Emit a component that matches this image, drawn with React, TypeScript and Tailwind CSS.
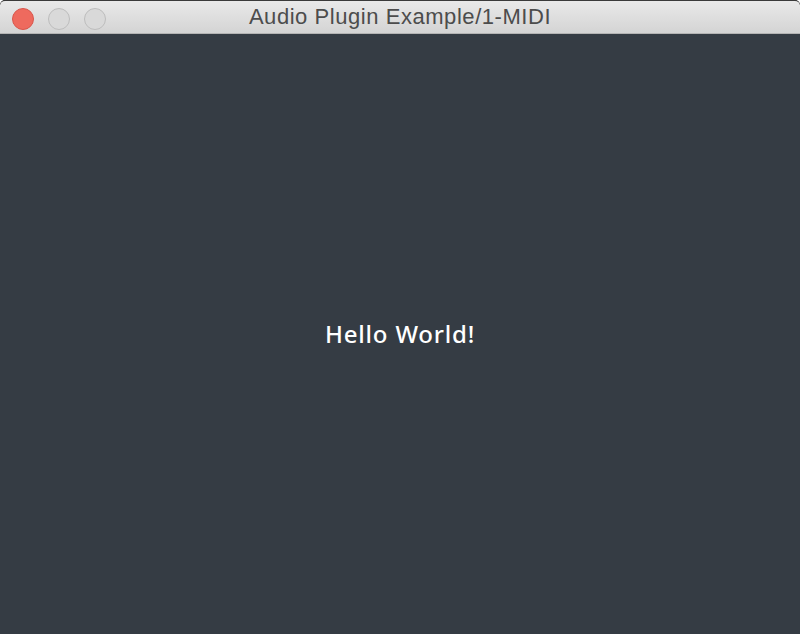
import React from "react";

export default function App() {
  return (
    <div className="w-[800px] h-[634px] flex flex-col bg-[#2a2a2a] overflow-hidden rounded-t-[5px]">
      <div className="relative h-[34px] shrink-0 border-t border-[#3a3a3a] bg-gradient-to-b from-[#e9e9e9] to-[#d4d4d4] border-b border-b-[#b4b4b4] flex items-center justify-center rounded-t-[5px]">
        <div className="absolute left-[12px] top-[7px] flex gap-[14px]">
          <div className="w-[22px] h-[22px] rounded-full bg-[#ee6a5e] border border-[#d9564b]" />
          <div className="w-[22px] h-[22px] rounded-full bg-[#d9d9d9] border border-[#bdbdbd]" />
          <div className="w-[22px] h-[22px] rounded-full bg-[#d9d9d9] border border-[#bdbdbd]" />
        </div>
        <span className="text-[22px] tracking-[0.55px] text-[#4c4c4c] font-['Liberation_Sans',sans-serif] leading-none">
          Audio Plugin Example/1-MIDI
        </span>
      </div>
      <div className="flex-1 bg-[#353c44] flex items-center justify-center">
        <span className="text-[24px] tracking-[0.8px] text-white font-medium font-['Noto_Sans',sans-serif]">
          Hello World!
        </span>
      </div>
    </div>
  );
}
